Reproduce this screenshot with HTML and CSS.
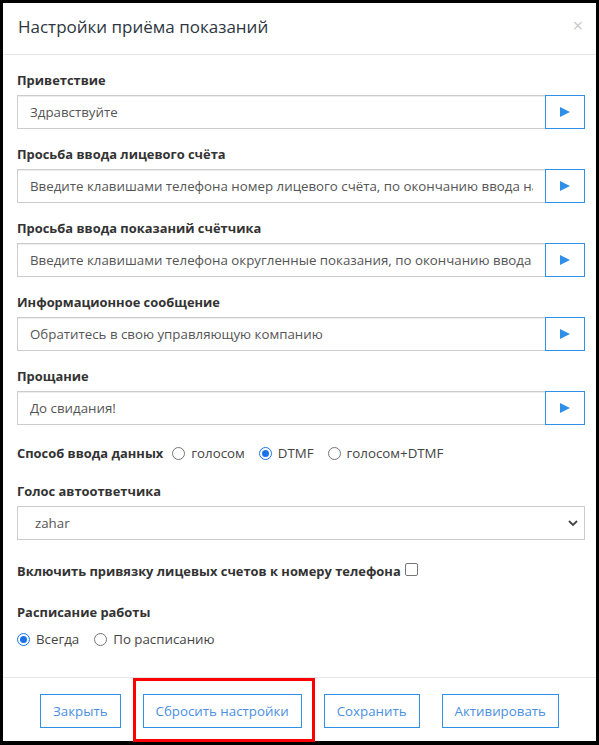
FILE: index.html
```html
<!DOCTYPE html>
<html lang="ru">
<head>
<meta charset="utf-8">
<title>Настройки приёма показаний</title>
<link rel="stylesheet" href="styles.css">
</head>
<body>
<div class="modal">
  <div class="modal-header">
    <h4 class="modal-title">Настройки приёма показаний</h4>
    <span class="close">×</span>
  </div>
  <div class="modal-body">
    <div class="group">
      <label class="lbl">Приветствие</label>
      <div class="input-group">
        <input class="input" type="text" value="Здравствуйте">
        <button class="play"><svg width="10" height="10" viewBox="0 0 10 10"><polygon points="0,0 10,5 0,10" fill="#2f8fe8"/></svg></button>
      </div>
    </div>
    <div class="group">
      <label class="lbl">Просьба ввода лицевого счёта</label>
      <div class="input-group">
        <input class="input" type="text" value="Введите клавишами телефона номер лицевого счёта, по окончанию ввода нажмите решётку">
        <button class="play"><svg width="10" height="10" viewBox="0 0 10 10"><polygon points="0,0 10,5 0,10" fill="#2f8fe8"/></svg></button>
      </div>
    </div>
    <div class="group">
      <label class="lbl">Просьба ввода показаний счётчика</label>
      <div class="input-group">
        <input class="input" type="text" value="Введите клавишами телефона округленные показания, по окончанию ввода нажмите решётку">
        <button class="play"><svg width="10" height="10" viewBox="0 0 10 10"><polygon points="0,0 10,5 0,10" fill="#2f8fe8"/></svg></button>
      </div>
    </div>
    <div class="group">
      <label class="lbl">Информационное сообщение</label>
      <div class="input-group">
        <input class="input" type="text" value="Обратитесь в свою управляющую компанию">
        <button class="play"><svg width="10" height="10" viewBox="0 0 10 10"><polygon points="0,0 10,5 0,10" fill="#2f8fe8"/></svg></button>
      </div>
    </div>
    <div class="group">
      <label class="lbl">Прощание</label>
      <div class="input-group">
        <input class="input" type="text" value="До свидания!">
        <button class="play"><svg width="10" height="10" viewBox="0 0 10 10"><polygon points="0,0 10,5 0,10" fill="#2f8fe8"/></svg></button>
      </div>
    </div>
    <div class="group radio-row">
      <span class="lbl">Способ ввода данных</span>
      <label class="opt"><span class="radio"></span>голосом</label>
      <label class="opt"><span class="radio on"></span>DTMF</label>
      <label class="opt"><span class="radio"></span>голосом+DTMF</label>
    </div>
    <div class="group">
      <label class="lbl">Голос автоответчика</label>
      <div class="select">
        <span>zahar</span>
        <svg width="10" height="7" viewBox="0 0 10 7"><polyline points="1,1 5,5 9,1" fill="none" stroke="#444" stroke-width="1.8"/></svg>
      </div>
    </div>
    <div class="group check-row">
      <span class="lbl">Включить привязку лицевых счетов к номеру телефона</span>
      <span class="checkbox"></span>
    </div>
    <div class="group last">
      <label class="lbl">Расписание работы</label>
      <div class="options">
        <label class="opt first"><span class="radio on"></span>Всегда</label>
        <label class="opt"><span class="radio"></span>По расписанию</label>
      </div>
    </div>
  </div>
  <div class="modal-footer">
    <button class="btn">Закрыть</button>
    <button class="btn">Сбросить настройки</button>
    <button class="btn">Сохранить</button>
    <button class="btn">Активировать</button>
    <div class="highlight"></div>
  </div>
</div>
</body>
</html>
```

FILE: styles.css
```css
* { box-sizing: border-box; }
html, body { margin: 0; padding: 0; background: #000; }
body { font-family: "Open Sans", "Noto Sans", sans-serif; color: #333; }
.modal {
  margin: 3px;
  width: 593px;
  height: 738px;
  background: #fff;
  display: flex;
  flex-direction: column;
}
.modal-header {
  position: relative;
  height: 52px;
  padding: 14px 15px 16px;
  border-bottom: 1px solid #e5e5e5;
}
.modal-title {
  margin: 0;
  font-size: 17px;
  line-height: 20px;
  font-weight: 400;
  color: #2d3640;
}
.close {
  position: absolute;
  right: 13px;
  top: 12px;
  font-size: 18px;
  line-height: 20px;
  color: #c8c8c8;
}
.modal-body {
  flex: 1;
  padding: 15px 11px 0 14px;
}
.group { margin-bottom: 15px; }
.group.last { margin-bottom: 0; }
.lbl {
  display: block;
  font-size: 12.9px;
  font-weight: 700;
  line-height: 20px;
  margin-bottom: 5px;
  color: #333;
}
.input-group { display: flex; height: 34px; }
.input {
  flex: 1;
  min-width: 0;
  height: 34px;
  border: 1px solid #ccc;
  border-right: 0;
  padding: 0 12px;
  font-family: inherit;
  font-size: 13.3px;
  color: #555;
  box-shadow: inset 0 1px 1px rgba(0,0,0,.075);
  outline: none;
}
.play {
  width: 40px;
  height: 34px;
  border: 1px solid #2f92e8;
  background: #fff;
  display: flex;
  align-items: center;
  justify-content: center;
  padding: 0;
}
.radio-row {
  display: flex;
  align-items: center;
  height: 26px;
}
.radio-row .lbl { margin: 0 9px 0 0; display: inline; }
.opt {
  display: inline-flex;
  align-items: center;
  font-size: 13.3px;
  color: #444;
  margin-right: 14px;
}
.radio {
  width: 13px;
  height: 13px;
  border: 1px solid #767676;
  border-radius: 50%;
  margin-right: 6px;
  display: inline-block;
  position: relative;
}
.radio.on { border: 1px solid #1a73e8; background: #fff; }
.radio.on::after {
  content: "";
  position: absolute;
  left: 2px; top: 2px;
  width: 7px; height: 7px;
  border-radius: 50%;
  background: #1a73e8;
}
.select {
  height: 34px;
  border: 1px solid #ccc;
  display: flex;
  align-items: center;
  justify-content: space-between;
  padding: 0 6px 0 17px;
  font-size: 13.3px;
  color: #555;
}
.check-row {
  display: flex;
  align-items: center;
  height: 32px;
}
.check-row .lbl { margin: 0 4px 0 0; display: inline; }
.checkbox {
  width: 13px;
  height: 13px;
  border: 1px solid #767676;
  border-radius: 2px;
  display: inline-block;
  margin-top: -4px;
}
.options { display: flex; align-items: center; height: 24px; }
.options .opt { margin-right: 15px; }
.modal-footer {
  position: relative;
  height: 64px;
  border-top: 1px solid #e5e5e5;
  padding-top: 16px;
  display: flex;
  justify-content: center;
  gap: 22px;
}
.btn {
  height: 34px;
  padding: 0 12px;
  border: 1px solid #2f92e8;
  background: #fff;
  color: #4a8fe0;
  font-family: inherit;
  font-size: 13.3px;
}
.highlight {
  position: absolute;
  left: 130px;
  top: 0;
  width: 182px;
  height: 64px;
  border: 3px solid #f00;
}
```
